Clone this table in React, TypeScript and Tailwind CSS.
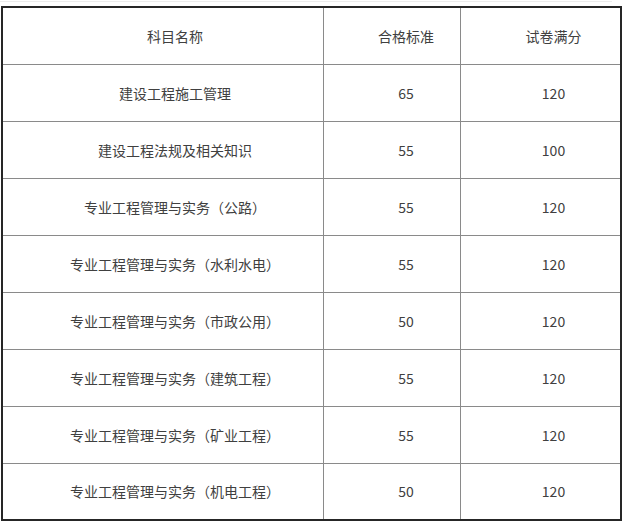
const rows: [string, string, string][] = [
  ["建设工程施工管理", "65", "120"],
  ["建设工程法规及相关知识", "55", "100"],
  ["专业工程管理与实务（公路）", "55", "120"],
  ["专业工程管理与实务（水利水电）", "55", "120"],
  ["专业工程管理与实务（市政公用）", "50", "120"],
  ["专业工程管理与实务（建筑工程）", "55", "120"],
  ["专业工程管理与实务（矿业工程）", "55", "120"],
  ["专业工程管理与实务（机电工程）", "50", "120"],
]

const Row = ({ cells, last }: { cells: [string, string, string]; last?: boolean }) => (
  <div className={`flex ${last ? "h-[55px]" : "h-[57px] border-b border-[#8a8a8a]"}`}>
    <div className="flex w-[321px] items-center justify-center border-r border-[#8a8a8a] pl-6">
      {cells[0]}
    </div>
    <div className="flex w-[137px] items-center justify-center border-r border-[#8a8a8a] pl-7">
      {cells[1]}
    </div>
    <div className="flex w-[157px] items-center justify-center pl-7">{cells[2]}</div>
  </div>
)

export default function App() {
  return (
    <div
      className="h-[521px] w-[623px] overflow-hidden bg-white text-[14px] text-[#404040]"
      style={{ fontFamily: '"Noto Sans CJK SC", "Microsoft YaHei", sans-serif' }}
    >
      <div className="mt-px h-px w-[612px] bg-[#ececec]" />
      <div className="ml-px mt-[4px] w-[621px] border-2 border-[#262626]">
        <Row cells={["科目名称", "合格标准", "试卷满分"]} />
        {rows.map((r, i) => (
          <Row key={i} cells={r} last={i === rows.length - 1} />
        ))}
      </div>
    </div>
  )
}
